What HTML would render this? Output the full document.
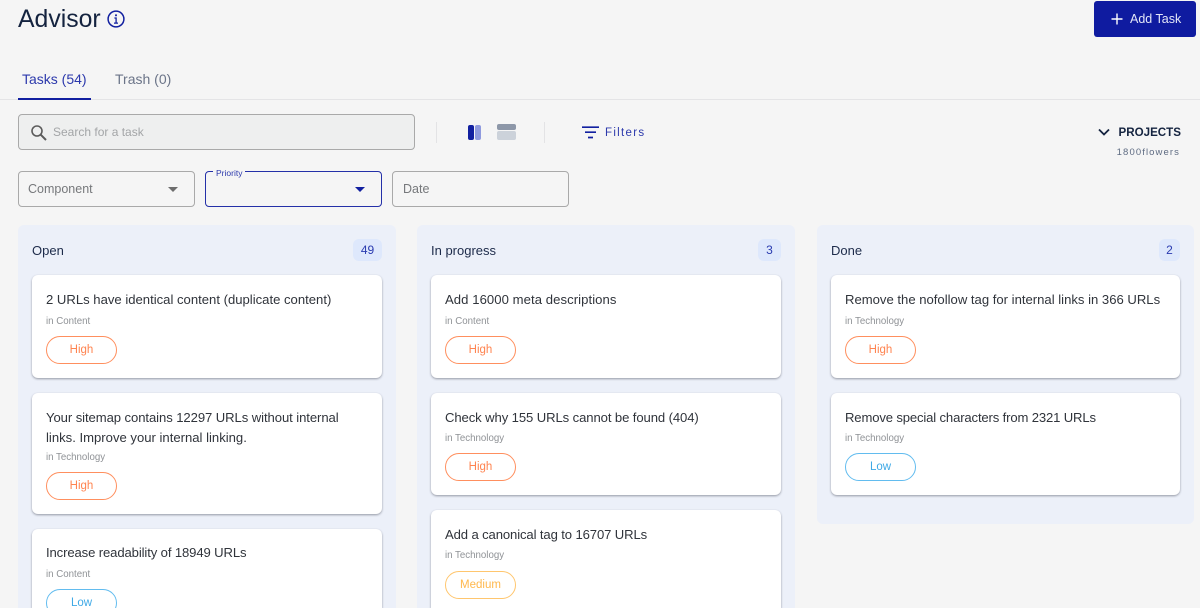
<!DOCTYPE html>
<html><head><meta charset="utf-8"><style>
html,body{margin:0;padding:0;width:1200px;height:608px;overflow:hidden}
body{background:#f5f5f5;font-family:"Liberation Sans",sans-serif}
#w{position:relative;width:1200px;height:608px;overflow:hidden;background:#f5f5f5}
.a,.col,.card,.pill,.t,.s{position:absolute}
.a{white-space:nowrap}
.col{background:#ecf0f9;border-radius:6px;overflow:hidden}
.card{background:#fff;border-radius:6px;box-shadow:0 1px 2px rgba(40,45,60,.45);overflow:hidden}
.t{left:14px;font-size:13.1px;line-height:20px;color:#30343b;white-space:nowrap}
.s{left:14px;font-size:9.7px;line-height:12px;color:#8f9296;white-space:nowrap}
.pill{left:14px;width:69px;height:26px;border-radius:14px;background:#fff;border:1px solid;font-size:11.5px;line-height:26px;text-align:center}
.h{border-color:#ff8f5e;color:#ff8450}
.m{border-color:#ffc66e;color:#ffb84d}
.l{border-color:#62bcef;color:#3fa9e6}
.ct{position:absolute;left:14px;top:18px;font-size:13px;line-height:16px;color:#1d2b4a}
.b{position:absolute;top:14px;right:14px;height:22px;background:#dee8fc;border-radius:6px;color:#2a3bb0;font-size:12px;line-height:22px;text-align:center}
</style></head><body><div id="w">
<div class="a" style="left:18px;top:4px;font-size:24.8px;line-height:32px;color:#14233f">Advisor</div>
<svg class="a" style="left:107px;top:10px" width="18" height="18" viewBox="0 0 18 18"><circle cx="9" cy="9" r="7.9" fill="none" stroke="#1220a0" stroke-width="1.5"/><rect x="8.1" y="4.4" width="1.8" height="1.8" fill="#1220a0"/><path d="M7.4 8h1.7v5M7 13.1h4" fill="none" stroke="#1220a0" stroke-width="1.3"/></svg>
<div class="a" style="left:1094px;top:1px;width:102px;height:36px;background:#0f1ba0;border-radius:3px"></div>
<svg class="a" style="left:1111px;top:13px" width="12" height="12" viewBox="0 0 12 12"><path d="M6 .5v11M.5 6h11" stroke="#fff" stroke-width="1.4"/></svg>
<div class="a" style="left:1130px;top:11px;font-size:12.5px;line-height:16px;color:#e4e7f8">Add Task</div>
<div class="a" style="left:22px;top:70px;font-size:14px;line-height:18px;color:#2c39ac">Tasks (54)</div>
<div class="a" style="left:115px;top:70px;font-size:14px;line-height:18px;color:#6b7488">Trash (0)</div>
<div class="a" style="left:0;top:99px;width:1200px;height:1px;background:#e4e4e6"></div>
<div class="a" style="left:18px;top:98px;width:73px;height:2px;background:#1220a0"></div>
<div class="a" style="left:18px;top:114px;width:395px;height:34px;border:1px solid #a9a9a9;border-radius:4px;background:#eeefef"></div>
<svg class="a" style="left:30px;top:124px" width="18" height="18" viewBox="0 0 18 18"><circle cx="7" cy="7" r="5" fill="none" stroke="#5c5c5c" stroke-width="1.6"/><path d="M10.6 10.6L16 16" stroke="#5c5c5c" stroke-width="2"/></svg>
<div class="a" style="left:53px;top:124px;font-size:12px;line-height:16px;color:#a3a5a7">Search for a task</div>
<div class="a" style="left:436px;top:122px;width:1px;height:21px;background:#e3e3e5"></div>
<div class="a" style="left:544px;top:122px;width:1px;height:21px;background:#e3e3e5"></div>
<div class="a" style="left:468px;top:125px;width:6px;height:15px;background:#1220a0;border-radius:2px"></div>
<div class="a" style="left:475px;top:125px;width:6px;height:15px;background:#8f9ade;border-radius:2px"></div>
<div class="a" style="left:497px;top:124px;width:19px;height:6px;background:#8d97a8;border-radius:2px"></div>
<div class="a" style="left:497px;top:131px;width:19px;height:9px;background:#ccd2da;border-radius:2px"></div>
<svg class="a" style="left:582px;top:126px" width="17" height="13" viewBox="0 0 17 13"><path d="M0 1.2h17M3 6.2h11M6 11.5h5" stroke="#1220a0" stroke-width="1.7"/></svg>
<div class="a" style="left:605px;top:126px;font-size:11.5px;line-height:15px;letter-spacing:1.3px;color:#2c39ac">Filters</div>
<svg class="a" style="left:1098px;top:128px" width="12" height="9" viewBox="0 0 12 9"><path d="M1 1.5l5 5 5-5" fill="none" stroke="#14233f" stroke-width="1.8"/></svg>
<div class="a" style="right:19px;top:125px;font-size:11.6px;line-height:15px;font-weight:bold;color:#14233f">PROJECTS</div>
<div class="a" style="right:20px;top:147px;font-size:9.5px;line-height:12px;letter-spacing:1.1px;color:#5e6b82">1800flowers</div>
<div class="a" style="left:18px;top:171px;width:175px;height:34px;border:1px solid #a9a9a9;border-radius:4px"></div>
<div class="a" style="left:28px;top:181px;font-size:12.5px;line-height:16px;color:#76787b">Component</div>
<div class="a" style="left:168px;top:187px;border:5px solid transparent;border-top-color:#6d6d6d;border-bottom:0"></div>
<div class="a" style="left:205px;top:171px;width:175px;height:34px;border:1px solid #2430a8;border-radius:4px"></div>
<div class="a" style="left:213px;top:168px;padding:0 3px;background:#f5f5f5;font-size:8.5px;line-height:10px;color:#2c39ac">Priority</div>
<div class="a" style="left:355px;top:187px;border:5px solid transparent;border-top-color:#1220a0;border-bottom:0"></div>
<div class="a" style="left:392px;top:171px;width:175px;height:34px;border:1px solid #a9a9a9;border-radius:4px"></div>
<div class="a" style="left:403px;top:181px;font-size:12.5px;line-height:16px;color:#76787b">Date</div>

<div class="col" style="left:18px;top:225px;width:378px;height:383px;border-radius:6px 6px 0 0">
<div class="ct">Open</div><div class="b" style="width:29px">49</div>
<div class="card" style="left:14px;top:50px;width:350px;height:103px"><div class="t" style="top:15px">2 URLs have identical content (duplicate content)</div><div class="s" style="top:41px">in Content</div><div class="pill h" style="top:61px">High</div></div>
<div class="card" style="left:14px;top:168px;width:350px;height:121px"><div class="t" style="top:15px"><span style="letter-spacing:-.08px">Your sitemap contains 12297 URLs without internal</span><br>links. Improve your internal linking.</div><div class="s" style="top:59px">in Technology</div><div class="pill h" style="top:79px">High</div></div>
<div class="card" style="left:14px;top:304px;width:350px;height:79px;border-radius:6px 6px 0 0"><div class="t" style="top:14px;letter-spacing:-.12px">Increase readability of 18949 URLs</div><div class="s" style="top:40px">in Content</div><div class="pill l" style="top:60px">Low</div></div>
</div>

<div class="col" style="left:417px;top:225px;width:378px;height:383px;border-radius:6px 6px 0 0">
<div class="ct">In progress</div><div class="b" style="width:23px">3</div>
<div class="card" style="left:14px;top:50px;width:350px;height:103px"><div class="t" style="top:15px;letter-spacing:.07px">Add 16000 meta descriptions</div><div class="s" style="top:41px">in Content</div><div class="pill h" style="top:61px">High</div></div>
<div class="card" style="left:14px;top:168px;width:350px;height:102px"><div class="t" style="top:15px;letter-spacing:-.1px">Check why 155 URLs cannot be found (404)</div><div class="s" style="top:40px">in Technology</div><div class="pill h" style="top:60px">High</div></div>
<div class="card" style="left:14px;top:285px;width:350px;height:98px;border-radius:6px 6px 0 0"><div class="t" style="top:15px;letter-spacing:-.12px">Add a canonical tag to 16707 URLs</div><div class="s" style="top:40px">in Technology</div><div class="pill m" style="top:61px">Medium</div></div>
</div>

<div class="col" style="left:817px;top:225px;width:377px;height:299px">
<div class="ct">Done</div><div class="b" style="width:21px">2</div>
<div class="card" style="left:14px;top:50px;width:349px;height:103px"><div class="t" style="top:15px">Remove the nofollow tag for internal links in 366 URLs</div><div class="s" style="top:41px">in Technology</div><div class="pill h" style="top:61px">High</div></div>
<div class="card" style="left:14px;top:168px;width:349px;height:102px"><div class="t" style="top:15px;letter-spacing:-.15px">Remove special characters from 2321 URLs</div><div class="s" style="top:40px">in Technology</div><div class="pill l" style="top:60px">Low</div></div>
</div>
</div></body></html>
